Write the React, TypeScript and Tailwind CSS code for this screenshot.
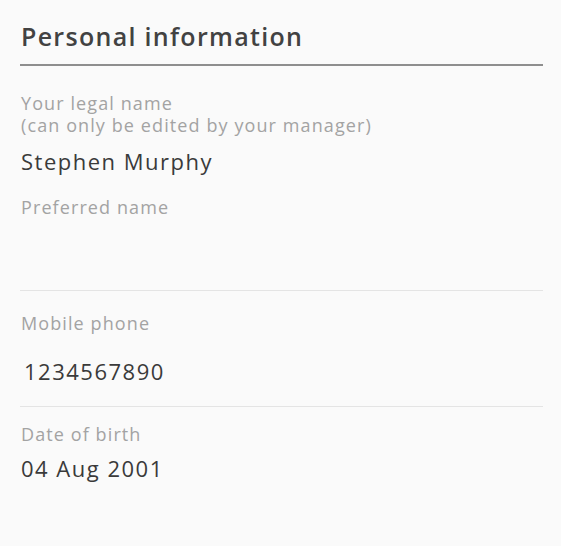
export default function App() {
  return (
    <div className="min-h-[546px] w-full bg-[#fafafa] px-5 pt-5 font-['Open_Sans',sans-serif]">
      <h1 className="pl-px text-[25px] font-semibold leading-8 tracking-[1.3px] text-[#424242]">Personal information</h1>
      <div className="mt-3 h-[2px] w-[523px] bg-[#8e8e8e]" />

      <div className="mt-[26px] pl-px text-[18px] leading-[22px] tracking-[1.1px] text-[#a3a3a3]">
        <p>Your legal name</p>
        <p>(can only be edited by your manager)</p>
      </div>
      <p className="mt-[11px] pl-px text-[22px] leading-7 tracking-[1.5px] text-[#3a3a3a]">Stephen Murphy</p>

      <p className="mt-[20px] pl-px text-[18px] leading-6 tracking-[1.1px] text-[#a3a3a3]">Preferred name</p>
      <div className="mt-[71px] h-px w-[523px] bg-[#e4e4e4]" />

      <p className="mt-[20px] pl-px text-[18px] leading-6 tracking-[1.1px] text-[#a3a3a3]">Mobile phone</p>
      <p className="mt-[22px] pl-1 text-[22px] leading-7 tracking-[1.5px] text-[#3a3a3a]">1234567890</p>
      <div className="mt-[21px] h-px w-[523px] bg-[#e4e4e4]" />

      <p className="mt-[15px] pl-px text-[18px] leading-6 tracking-[1.1px] text-[#a3a3a3]">Date of birth</p>
      <p className="mt-[8px] pl-px text-[22px] leading-7 tracking-[1.5px] text-[#3a3a3a]">04 Aug 2001</p>
    </div>
  );
}
